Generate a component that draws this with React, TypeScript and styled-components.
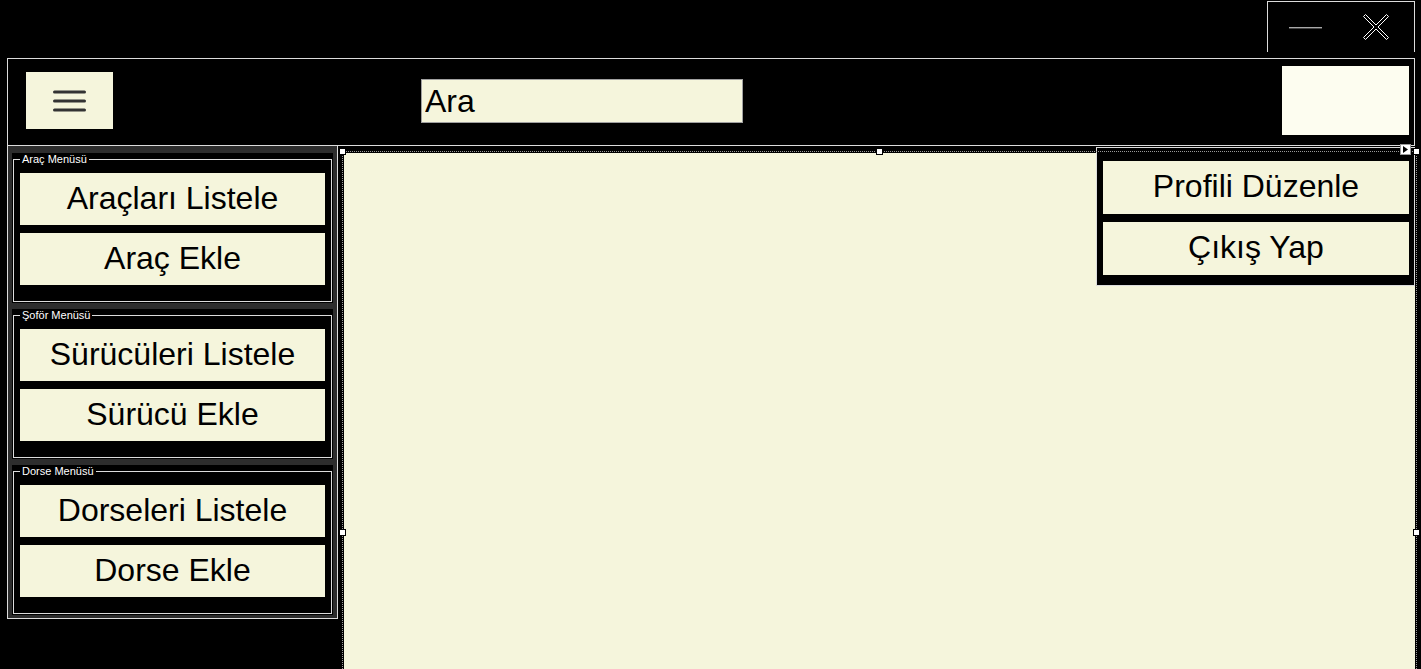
import React from "react";
import styled, { createGlobalStyle } from "styled-components";

const GlobalStyle = createGlobalStyle`
  html, body { margin: 0; padding: 0; background: #000; }
  body { font-family: "Liberation Sans", Arial, sans-serif; }
  * { box-sizing: border-box; }
`;

const BEIGE = "#f5f5dc";
const LINE = "#dcdcdc";

const Screen = styled.div`
  width: 1421px;
  height: 669px;
  overflow: hidden;
  background: #000;
  position: relative;
`;

const TitleRow = styled.div`
  height: 58px;
  display: flex;
  justify-content: flex-end;
  padding-right: 6px;
`;

const ControlBox = styled.div`
  margin-top: 1px;
  width: 148px;
  height: 51px;
  border: 1px solid ${LINE};
  border-bottom: none;
  display: flex;
`;

const CtlButton = styled.div<{ $pl: number }>`
  width: 73px;
  height: 100%;
  display: flex;
  align-items: center;
  padding-left: ${(p) => p.$pl}px;
`;

const Header = styled.div`
  margin-left: 7px;
  width: 1408px;
  height: 88px;
  border: 1px solid ${LINE};
  display: flex;
  align-items: flex-start;
`;

const MenuButton = styled.div`
  margin: 13px 0 0 18px;
  width: 87px;
  height: 57px;
  background: ${BEIGE};
  display: flex;
  align-items: center;
  justify-content: center;
`;

const SearchBox = styled.input`
  margin: 20px 0 0 308px;
  width: 322px;
  height: 44px;
  border: 1px solid #a0a0a0;
  background: ${BEIGE};
  font-family: "Liberation Sans", Arial, sans-serif;
  font-size: 32px;
  color: #000;
  padding: 0 0 0 3px;
  outline: none;
`;

const ProfileBox = styled.div`
  margin: 7px 5px 0 auto;
  width: 127px;
  height: 69px;
  background: #fdfdf0;
`;

const BodyRow = styled.div`
  display: flex;
  align-items: flex-start;
  margin-left: 7px;
`;

const SidePanel = styled.div`
  width: 331px;
  border: 1px solid ${LINE};
  border-top: none;
  background: #2d2d2d;
  padding: 7px 5px 3px 4px;
  display: flex;
  flex-direction: column;
  gap: 6px;
`;

const Group = styled.div`
  position: relative;
  width: 321px;
  height: 150px;
  background: #000;
  padding: 20px 0 0 8px;
  display: flex;
  flex-direction: column;
  gap: 8px;
`;

const GroupFrame = styled.div`
  position: absolute;
  top: 6px;
  left: 1px;
  right: 1px;
  bottom: 1px;
  border: 1px solid ${LINE};
  pointer-events: none;
`;

const GroupTitle = styled.span`
  position: absolute;
  top: 0;
  left: 8px;
  padding: 0 2px;
  background: #000;
  color: #fff;
  font-size: 11px;
  line-height: 13px;
  font-family: "Liberation Sans", Arial, sans-serif;
`;

const MenuItem = styled.div<{ $w: number; $h: number }>`
  position: relative;
  width: ${(p) => p.$w}px;
  height: ${(p) => p.$h}px;
  background: ${BEIGE};
  color: #000;
  font-size: 32px;
  display: flex;
  align-items: center;
  justify-content: center;
  padding-bottom: 2px;
  white-space: nowrap;
`;

const Main = styled.div`
  position: relative;
  margin: 5px 0 0 4px;
  width: 1075px;
  height: 762px;
  padding: 2px;
`;

const MainFill = styled.div`
  width: 100%;
  height: 100%;
  background: ${BEIGE};
`;

const SelectionFrame = styled.div`
  position: absolute;
  inset: 0;
  border: 1px dotted #9a9a9a;
  z-index: 2;
  pointer-events: none;
`;

const Handle = styled.div<{ $x: number; $y: number }>`
  position: absolute;
  left: ${(p) => p.$x - 3}px;
  top: ${(p) => p.$y - 3}px;
  width: 7px;
  height: 7px;
  background: #fff;
  border: 1px solid #000;
  z-index: 3;
`;

const SmartTag = styled.div`
  position: absolute;
  left: 1058px;
  top: -7px;
  width: 11px;
  height: 11px;
  background: #fff;
  border: 1px solid #9a9a9a;
  z-index: 3;
  display: flex;
  align-items: center;
  justify-content: center;
`;

const Dropdown = styled.div`
  position: absolute;
  left: 754px;
  top: -4px;
  width: 319px;
  height: 139px;
  border: 1px solid ${LINE};
  background: #000;
  z-index: 1;
  padding: 13px 0 0 6px;
  display: flex;
  flex-direction: column;
  gap: 8px;
`;

const groups = [
  { title: "Araç Menüsü", items: ["Araçları Listele", "Araç Ekle"] },
  { title: "Şoför Menüsü", items: ["Sürücüleri Listele", "Sürücü Ekle"] },
  { title: "Dorse Menüsü", items: ["Dorseleri Listele", "Dorse Ekle"] },
];

export default function App() {
  return (
    <Screen>
      <GlobalStyle />
      <TitleRow>
        <ControlBox>
          <CtlButton $pl={21}>
            <svg width="33" height="3" viewBox="0 0 33 3">
              <rect x="0" y="1" width="33" height="1.4" fill="#a8a8a8" />
            </svg>
          </CtlButton>
          <CtlButton $pl={21}>
            <svg width="28" height="28" viewBox="0 0 28 28">
              <g stroke="#fff" strokeWidth="1" fill="#000">
                <path d="M1.5 3.5 L3.5 1.5 L14 12 L24.5 1.5 L26.5 3.5 L16 14 L26.5 24.5 L24.5 26.5 L14 16 L3.5 26.5 L1.5 24.5 L12 14 Z" />
              </g>
            </svg>
          </CtlButton>
        </ControlBox>
      </TitleRow>

      <Header>
        <MenuButton>
          <svg width="33" height="22" viewBox="0 0 33 22">
            <g stroke="#333" strokeWidth="3" strokeLinecap="round">
              <line x1="1.5" y1="2" x2="31.5" y2="2" />
              <line x1="1.5" y1="11" x2="31.5" y2="11" />
              <line x1="1.5" y1="20" x2="31.5" y2="20" />
            </g>
          </svg>
        </MenuButton>
        <SearchBox defaultValue="Ara" readOnly />
        <ProfileBox />
      </Header>

      <BodyRow>
        <SidePanel>
          {groups.map((g) => (
            <Group key={g.title}>
              <GroupFrame />
              <GroupTitle>{g.title}</GroupTitle>
              {g.items.map((it) => (
                <MenuItem key={it} $w={305} $h={52}>
                  {it}
                </MenuItem>
              ))}
            </Group>
          ))}
        </SidePanel>

        <Main>
          <MainFill />
          <SelectionFrame />
          <Handle $x={0} $y={0} />
          <Handle $x={537} $y={0} />
          <Handle $x={1074} $y={0} />
          <Handle $x={0} $y={381} />
          <Handle $x={1074} $y={381} />
          <SmartTag>
            <svg width="5" height="7" viewBox="0 0 5 7">
              <path d="M0 0 L5 3.5 L0 7 Z" fill="#000" />
            </svg>
          </SmartTag>
          <Dropdown>
            <MenuItem $w={306} $h={53}>Profili Düzenle</MenuItem>
            <MenuItem $w={306} $h={53}>Çıkış Yap</MenuItem>
          </Dropdown>
        </Main>
      </BodyRow>
    </Screen>
  );
}
